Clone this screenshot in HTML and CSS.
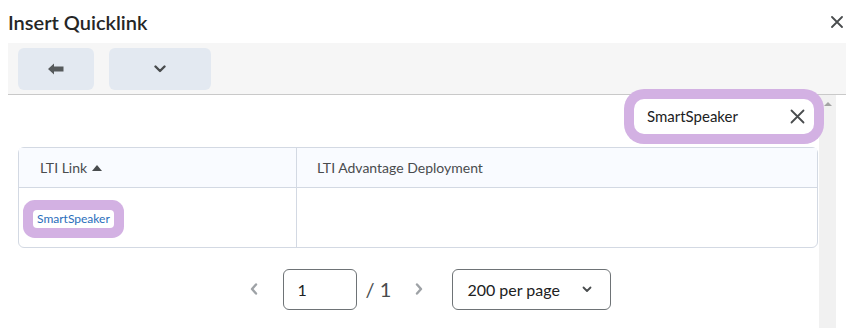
FILE: index.html
```html
<!DOCTYPE html>
<html lang="en">
<head>
  <meta charset="UTF-8" />
  <meta name="viewport" content="width=device-width, initial-scale=1.0"/>
  <title>Insert Quicklink</title>
  <link rel="stylesheet" href="styles.css">
</head>
<body>
  <div class="dialog-head">
    <h1>Insert Quicklink</h1>
    <button class="close-btn" aria-label="Close">
      <svg width="12" height="12" viewBox="0 0 12 12"><path d="M1 1L11 11M11 1L1 11" stroke="#494c4e" stroke-width="1.8" stroke-linecap="round"/></svg>
    </button>
  </div>

  <div class="toolbar">
    <button class="tool-btn back" aria-label="Back">
      <svg width="16" height="12" viewBox="0 0 16 12"><path d="M0 6L6 0.5V3.5H15.5V8.5H6V11.5Z" fill="#565a5c"/></svg>
    </button>
    <button class="tool-btn more" aria-label="More">
      <svg width="12" height="8" viewBox="0 0 12 8"><path d="M1.5 1.5L6 6L10.5 1.5" fill="none" stroke="#494c4e" stroke-width="2.4" stroke-linecap="round" stroke-linejoin="round"/></svg>
    </button>
  </div>

  <div class="main">
    <div class="content">
      <div class="search-row">
        <div class="search">
          <span class="search-text">SmartSpeaker</span>
          <svg width="15" height="15" viewBox="0 0 15 15"><path d="M1.5 1.5L13.5 13.5M13.5 1.5L1.5 13.5" stroke="#494c4e" stroke-width="1.8" stroke-linecap="round"/></svg>
        </div>
      </div>

      <table class="grid">
        <thead>
          <tr>
            <th class="col-link">LTI Link <span class="sort"></span></th>
            <th>LTI Advantage Deployment</th>
          </tr>
        </thead>
        <tbody>
          <tr>
            <td class="col-link"><a href="#" class="link-pill">SmartSpeaker</a></td>
            <td></td>
          </tr>
        </tbody>
      </table>

      <div class="pager">
        <button class="page-arrow" aria-label="Previous">
          <svg width="8" height="12" viewBox="0 0 8 12"><path d="M6 1.5L2 6L6 10.5" fill="none" stroke="#9ea2a6" stroke-width="2.4" stroke-linecap="round" stroke-linejoin="round"/></svg>
        </button>
        <div class="page-input">1</div>
        <span class="page-total">/ 1</span>
        <button class="page-arrow" aria-label="Next">
          <svg width="8" height="12" viewBox="0 0 8 12"><path d="M2 1.5L6 6L2 10.5" fill="none" stroke="#9ea2a6" stroke-width="2.4" stroke-linecap="round" stroke-linejoin="round"/></svg>
        </button>
        <div class="page-size">
          <span>200 per page</span>
          <svg width="10" height="7" viewBox="0 0 10 7"><path d="M1.5 1.5L5 5L8.5 1.5" fill="none" stroke="#494c4e" stroke-width="1.8" stroke-linecap="round" stroke-linejoin="round"/></svg>
        </div>
      </div>
    </div>
    <div class="scrollbar"><span class="scroll-up"></span></div>
  </div>
</body>
</html>
```

FILE: styles.css
```css
body { margin: 0; font-family: Lato, "Noto Sans", sans-serif; color: #202122; background: #fff; overflow: hidden; }
button { font-family: inherit; border: none; background: none; padding: 0; cursor: pointer; }

.dialog-head { height: 43px; display: flex; align-items: center; justify-content: space-between; padding: 0 18px 0 8px; }
.dialog-head h1 { margin: 0; font-size: 20px; font-weight: 600; color: #262626; }
.close-btn { display: flex; width: 12px; height: 12px; margin-top: 1px; }

.toolbar { margin: 0 15px 0 8px; background: #f6f6f6; padding: 5px 10px 4px; display: flex; gap: 15px; border-bottom: 1px solid #c9c9c9; }
.tool-btn { height: 42px; border-radius: 6px; background: #e3e9f1; display: flex; align-items: center; justify-content: center; }
.tool-btn.back { width: 76px; }
.tool-btn.more { width: 102px; }

.main { display: flex; margin: 0 25px 0 8px; height: 233px; }
.content { flex: 1; padding: 4px 1px 0 10px; }
.scrollbar { width: 17px; background: #f1f1f1; position: relative; }
.scroll-up { position: absolute; top: 7px; left: 5px; border-left: 4px solid transparent; border-right: 4px solid transparent; border-bottom: 4px solid #a3a3a3; }

.search-row { display: flex; justify-content: flex-end; padding-right: 4px; position: relative; z-index: 1; }
.search { width: 180px; height: 35px; box-sizing: border-box; background: #fff; border-radius: 10px; box-shadow: 0 0 0 10px #d3b1e3; display: flex; align-items: center; justify-content: space-between; padding: 0 9px 0 13px; }
.search-text { font-size: 15px; color: #202122; margin-top: -2px; }
.search svg { display: block; }

.grid { width: 800px; margin-top: 13px; border-collapse: separate; border-spacing: 0; border: 1px solid #d3d9e3; border-radius: 6px; }
.grid th { height: 39px; background: #f9fbff; text-align: left; font-weight: 400; font-size: 14px; color: #494c4e; padding: 0 20px; border-bottom: 1px solid #d3d9e3; }
.grid td { height: 59px; padding: 0 14px; }
.grid .col-link { width: 278px; border-right: 1px solid #d3d9e3; box-sizing: border-box; }
.grid th.col-link { padding-left: 21px; }
.sort { display: inline-block; vertical-align: middle; margin-left: 1px; margin-bottom: 2px; border-left: 5px solid transparent; border-right: 5px solid transparent; border-bottom: 6px solid #494c4e; }

.link-pill { display: inline-block; font-size: 12px; line-height: 18px; padding: 0 4px; color: #2a6ebb; text-decoration: none; background: #fff; border-radius: 4px; box-shadow: 0 0 0 10px #d3b1e3; }

.pager { display: flex; align-items: center; justify-content: center; padding-left: 8px; margin-top: 20px; }
.page-arrow { width: 42px; height: 42px; display: flex; align-items: center; justify-content: center; }
.page-input { width: 74px; height: 41px; box-sizing: border-box; border: 1px solid #6e7376; border-radius: 6px; font-size: 16px; line-height: 39px; padding-left: 14px; margin-left: 8px; }
.page-total { font-size: 20px; margin: 0 7px 0 9px; color: #494c4e; }
.page-size { width: 159px; height: 41px; box-sizing: border-box; border: 1px solid #6e7376; border-radius: 6px; display: flex; align-items: center; justify-content: space-between; padding: 0 18px 0 14px; margin-left: 12px; font-size: 16px; }
```
